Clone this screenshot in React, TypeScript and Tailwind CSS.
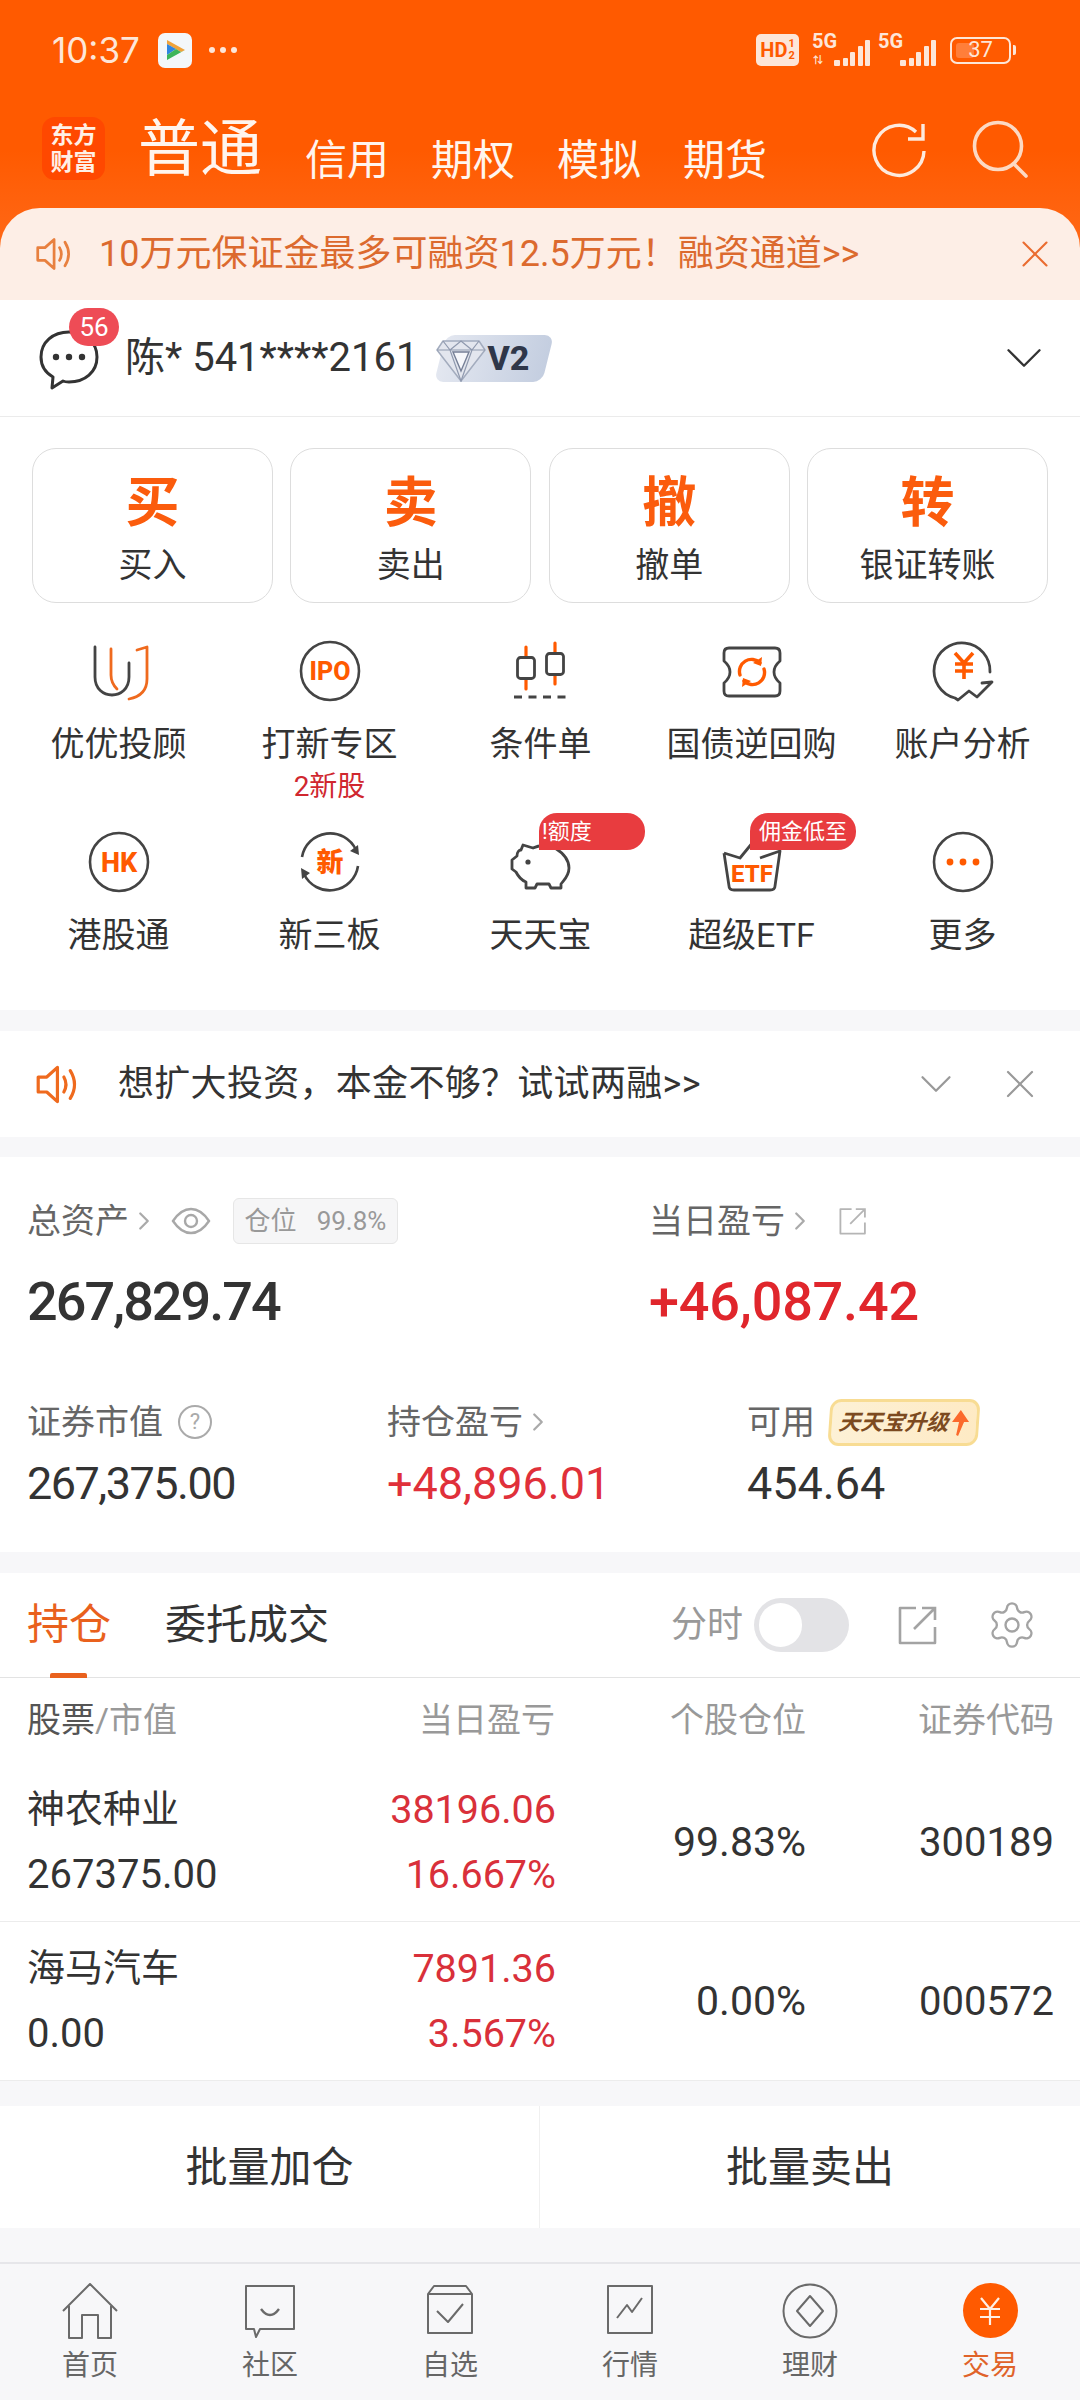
import { ChevronDown, X, ChevronRight, Settings } from "lucide-react";
import type { ReactNode } from "react";

const DARK = "#444444";
const ORANGE = "#ff5a00";

function Svg({ size = 64, children, className = "" }: { size?: number; children: ReactNode; className?: string }) {
  return (
    <svg width={size} height={size} viewBox="0 0 64 64" fill="none" className={className}>
      {children}
    </svg>
  );
}

function Ring() {
  return <circle cx="32" cy="32" r="29" stroke={DARK} strokeWidth="2.6" />;
}

function BadgeText({ children, size = 20 }: { children: string; size?: number }) {
  return (
    <text x="32" y="32" dy="0.36em" textAnchor="middle" fontSize={size} fontWeight="800" fill={ORANGE} fontFamily="Roboto, 'Noto Sans CJK SC', sans-serif">
      {children}
    </text>
  );
}

const UyouIcon = () => (
  <Svg>
    <path d="M8 8V38C8 62 42 62 42 38V24" stroke={DARK} strokeWidth="2.8" strokeLinecap="round" />
    <path d="M24 10V36Q24 44 30 50" stroke="#ef6a1e" strokeWidth="2.8" strokeLinecap="round" />
    <path d="M50 11L60 8V40C60 52 52 58 42 60" stroke="#ef6a1e" strokeWidth="2.8" strokeLinecap="round" strokeLinejoin="round" />
  </Svg>
);

const IpoIcon = () => (
  <Svg>
    <Ring />
    <BadgeText size={25}>IPO</BadgeText>
  </Svg>
);

const CandleIcon = () => (
  <Svg>
    <path d="M17 8V50M46 4V45" stroke={ORANGE} strokeWidth="3.2" strokeLinecap="round" />
    <rect x="8.5" y="18.5" width="17" height="21" rx="3" fill="#fff" stroke={DARK} strokeWidth="2.8" />
    <rect x="37.5" y="14.5" width="17" height="21" rx="3" fill="#fff" stroke={DARK} strokeWidth="2.8" />
    <path d="M5 58H59" stroke={DARK} strokeWidth="2.8" strokeDasharray="8 6.5" />
  </Svg>
);

const RepoIcon = () => (
  <Svg>
    <path d="M9 9H55Q60 9 60 14V22Q54 27 54 33T60 44V52Q60 57 55 57H9Q4 57 4 52V44Q10 39 10 33T4 22V14Q4 9 9 9Z" stroke={DARK} strokeWidth="2.8" strokeLinejoin="round" />
    <path d="M20 36A12 12 0 0 1 40 24M44 30A12 12 0 0 1 24 42" stroke={ORANGE} strokeWidth="3.4" strokeLinecap="round" />
    <path d="M42 18L41 27L33 24ZM22 48L23 39L31 42Z" fill={ORANGE} />
  </Svg>
);

const AnalysisIcon = () => (
  <Svg>
    <path d="M59 33A28 28 0 1 0 24 59L27 61L38 52L46 58L61 43L51 44" stroke={DARK} strokeWidth="2.8" strokeLinejoin="round" strokeLinecap="round" />
    <path d="M24 14L33 24L42 14M33 24V40M24 25H42M24 32H42" stroke={ORANGE} strokeWidth="3.6" />
  </Svg>
);

const HkIcon = () => (
  <Svg>
    <Ring />
    <BadgeText size={27}>HK</BadgeText>
  </Svg>
);

const NewIcon = () => (
  <Svg>
    <path d="M4 27A28.5 28.5 0 0 1 58 20M60 36A28.5 28.5 0 0 1 6 44" stroke={DARK} strokeWidth="2.6" />
    <path d="M61 25L52 21L60 15ZM3 38L12 43L4 49Z" fill={DARK} />
    <BadgeText size={27}>新</BadgeText>
  </Svg>
);

const PigIcon = () => (
  <Svg>
    <path
      d="M14 15L24 18C30 15 40 15 46 18C54 23 60 30 60 38C60 46 55 50 52 54V58H42L40 54H28L26 58H17V52C12 50 9 46 7 42L3 39V30L8 26C8 22 10 20 12 20Z"
      stroke={DARK}
      strokeWidth="2.8"
      strokeLinejoin="round"
    />
    <circle cx="19" cy="32" r="2.6" fill={DARK} />
  </Svg>
);

const EtfIcon = () => (
  <Svg>
    <path d="M4 23L20 28L38 6M40 28L60 21L55 56Q55 60 50 60H14Q9 60 9 56L4 23" stroke={DARK} strokeWidth="2.8" strokeLinejoin="round" />
    <text x="32" y="52" textAnchor="middle" fontSize="24" fontWeight="800" fill={ORANGE} fontFamily="Roboto, sans-serif">
      ETF
    </text>
  </Svg>
);

const MoreIcon = () => (
  <Svg>
    <Ring />
    <circle cx="19" cy="32" r="3.4" fill={ORANGE} />
    <circle cx="32" cy="32" r="3.4" fill={ORANGE} />
    <circle cx="45" cy="32" r="3.4" fill={ORANGE} />
  </Svg>
);

function Speaker({ color, className }: { color: string; className: string }) {
  return (
    <svg viewBox="0 0 44 40" fill="none" className={className}>
      <path d="M3 13H11L21 4V36L11 27H3Z" stroke={color} strokeWidth="3" strokeLinejoin="round" />
      <path d="M27 13Q31 20 27 27M33 7Q41 20 33 33" stroke={color} strokeWidth="3" strokeLinecap="round" />
    </svg>
  );
}

function Bars({ color = "#fde6d8" }: { color?: string }) {
  const heights = [8, 14, 20, 26];
  return (
    <div className="flex items-end gap-[2.5px] h-[28px]">
      <div className="w-[6px] h-[6px] rounded-[1px]" style={{ background: color }} />
      {heights.map((h) => (
        <div key={h} className="w-[5px] rounded-[1px]" style={{ height: h, background: color }} />
      ))}
    </div>
  );
}

function StatusBar() {
  return (
    <div className="h-[100px] flex justify-between items-center pl-[52px] pr-[64px] text-[#fde6d8]">
      <div className="flex items-center">
        <span className="text-[35px] font-['Inter','Roboto',sans-serif] leading-none">10:37</span>
        <div className="ml-[18px] w-[34px] h-[35px] rounded-[7px] bg-[#f3f7fa] flex items-center justify-center">
          <svg width="24" height="24" viewBox="0 0 24 24">
            <path d="M4 2L22 12L18 14L4 6Z" fill="#f1a33b" />
            <path d="M4 6L13 11L4 17Z" fill="#2f86e0" />
            <path d="M22 12L4 22V17L13 11L18 14Z" fill="#3cb55a" />
          </svg>
        </div>
        <div className="ml-[17px] flex gap-[5px]">
          <span className="w-[6px] h-[6px] rounded-full bg-[#fde6d8]" />
          <span className="w-[6px] h-[6px] rounded-full bg-[#fde6d8]" />
          <span className="w-[6px] h-[6px] rounded-full bg-[#fde6d8]" />
        </div>
      </div>
      <div className="flex items-center">
        <div className="w-[43px] h-[32px] rounded-[5px] bg-[#fde6d8] flex items-center justify-center text-[#ff5a00] font-bold text-[20px] leading-none font-['Roboto',sans-serif]">
          HD<span className="flex flex-col text-[11px] leading-[12px] ml-[1px]"><span>1</span><span>2</span></span>
        </div>
        <div className="relative ml-[13px] w-[58px] h-[32px]">
          <span className="absolute left-0 top-[-3px] text-[20px] font-bold leading-[20px] font-['Roboto',sans-serif]">5G</span>
          <span className="absolute left-[1px] bottom-[0px] text-[10px] leading-[10px] font-bold">⇅</span>
          <div className="absolute right-0 bottom-0"><Bars /></div>
        </div>
        <div className="relative ml-[8px] w-[58px] h-[32px]">
          <span className="absolute left-0 top-[-3px] text-[20px] font-bold leading-[20px] font-['Roboto',sans-serif]">5G</span>
          <div className="absolute right-0 bottom-0"><Bars /></div>
        </div>
        <div className="ml-[14px] w-[61px] h-[27px] rounded-[7px] border-2 border-[#fde6d8] relative flex items-center justify-center">
          <div className="absolute left-[4px] top-[4px] bottom-[4px] w-[18px] rounded-[3px] bg-[#ff7e3a]" />
          <span className="relative text-[22px] leading-none font-['Roboto',sans-serif]">37</span>
        </div>
        <div className="ml-[2px] w-[3px] h-[10px] rounded-r-[2px] bg-[#fde6d8]" />
      </div>
    </div>
  );
}

function TopNav() {
  const tabs = ["信用", "期权", "模拟", "期货"];
  return (
    <div className="h-[108px] flex items-start pl-[42px] text-[#fff5ee]">
      <div className="mt-[17px] w-[63px] h-[63px] rounded-[13px] bg-[#ff4800] flex flex-col items-center justify-center text-[23px] leading-[27px] font-bold text-[#fff0e6]">
        <span>东方</span>
        <span>财富</span>
      </div>
      <span className="ml-[33px] mt-[12px] text-[62px] leading-[76px]">普通</span>
      <div className="ml-[43px] mt-[31px] flex gap-[42px] text-[42px] leading-[60px]">
        {tabs.map((t) => (
          <span key={t}>{t}</span>
        ))}
      </div>
      <div className="ml-auto mr-[50px] mt-[20px] flex gap-[44px] items-center">
        <svg width="58" height="58" viewBox="0 0 58 58" fill="none" stroke="#fdeadd" strokeWidth="3.4">
          <path d="M54 31A25 25 0 1 1 46 12" />
          <path d="M53 4V19H38" />
        </svg>
        <svg width="58" height="58" viewBox="0 0 58 58" fill="none" stroke="#fcd9c3" strokeWidth="3.6">
          <circle cx="26" cy="26" r="23.5" />
          <path d="M42 44L54 56" strokeLinecap="round" />
        </svg>
      </div>
    </div>
  );
}

function PromoBanner() {
  return (
    <div className="h-[92px] rounded-t-[40px] bg-[#fdeee6] flex items-center pl-[35px] pr-[22px] text-[#dc6a2e]">
      <Speaker color="#e8803f" className="w-[40px] h-[38px]" />
      <span className="ml-[24px] text-[36px] leading-[50px]">10万元保证金最多可融资12.5万元！融资通道&gt;&gt;</span>
      <X className="ml-auto text-[#ea6c30]" size={46} strokeWidth={1.1} />
    </div>
  );
}

function AccountRow() {
  return (
    <div className="h-[117px] bg-white border-b border-[#ebebeb] flex items-center pl-[39px] pr-[25px]">
      <div className="relative w-[60px] h-[60px] mt-[3px]">
        <svg width="60" height="60" viewBox="0 0 60 60" fill="none">
          <path d="M30 2C14 2 2 12 2 27C2 36 7 43 14 47L13 58L24 51C26 52 28 52 30 52C46 52 58 42 58 27C58 12 46 2 30 2Z" stroke="#333" strokeWidth="3" strokeLinejoin="round" />
          <circle cx="17" cy="27" r="3.2" fill="#333" />
          <circle cx="30" cy="27" r="3.2" fill="#333" />
          <circle cx="43" cy="27" r="3.2" fill="#333" />
        </svg>
        <span className="absolute left-[30px] top-[-22px] w-[50px] h-[38px] rounded-full bg-[#ee4c56] text-white text-[26px] leading-[38px] text-center">56</span>
      </div>
      <span className="ml-[26px] text-[40px] leading-[50px] text-[#333]">陈* 541****2161</span>
      <div className="relative ml-[18px] w-[112px] h-[47px] flex items-center">
        <div className="absolute inset-y-0 left-[4px] right-0 -skew-x-[14deg] rounded-[9px] bg-gradient-to-r from-[#e3e7f0] to-[#c4cee0]" />
        <svg width="50" height="48" viewBox="0 0 50 48" className="relative">
          <path d="M7 7H43L49 16L25 47L1 16Z" fill="#e3e6ee" stroke="#a3acbe" strokeWidth="1.5" strokeLinejoin="round" />
          <path d="M7 7L14 16L25 47L36 16L43 7M1 16H49M14 16L25 7L36 16" fill="none" stroke="#8f99ae" strokeWidth="1.2" />
          <path d="M17 18H33L25 37Z" fill="#f6f7fb" stroke="#757f96" strokeWidth="1.4" />
        </svg>
        <span className="relative text-[34px] font-extrabold text-[#2f3749] leading-none ml-[1px] font-['Roboto',sans-serif]">V2</span>
      </div>
      <ChevronDown className="ml-auto text-[#333]" size={62} strokeWidth={0.9} />
    </div>
  );
}

function ActionCard({ big, label }: { big: string; label: string }) {
  return (
    <div className="w-[241px] h-[155px] rounded-[24px] border border-[#dddddd] flex flex-col items-center">
      <span className="mt-[25px] text-[54px] leading-[60px] font-bold text-[#fb5c0d]">{big}</span>
      <span className="mt-[8px] text-[34px] leading-[46px] text-[#333]">{label}</span>
    </div>
  );
}

function Entry({ icon, label, sub, pill, pillClass }: { icon: ReactNode; label: string; sub?: string; pill?: string; pillClass?: string }) {
  return (
    <div className="relative flex flex-col items-center">
      <div className="w-[64px] h-[64px]">{icon}</div>
      <span className="mt-[19px] text-[34px] leading-[44px] text-[#333] whitespace-nowrap">{label}</span>
      {sub && <span className="mt-[4px] text-[28px] leading-[34px] text-[#d0272f]">{sub}</span>}
      {pill && (
        <span className={`absolute top-[-17px] h-[37px] rounded-t-[18px] rounded-br-[18px] bg-[#e83c3f] text-white text-[22px] leading-[37px] whitespace-nowrap overflow-hidden ${pillClass}`}>
          {pill}
        </span>
      )}
    </div>
  );
}

function Actions() {
  return (
    <div className="h-[593px] bg-white pt-[31px]">
      <div className="flex justify-between pl-[32px] pr-[32px]">
        <ActionCard big="买" label="买入" />
        <ActionCard big="卖" label="卖出" />
        <ActionCard big="撤" label="撤单" />
        <ActionCard big="转" label="银证转账" />
      </div>
      <div className="mt-[36px] ml-[13px] grid grid-cols-[211px_211px_211px_211px_211px] grid-rows-[191px_auto]">
        <Entry icon={<UyouIcon />} label="优优投顾" />
        <Entry icon={<IpoIcon />} label="打新专区" sub="2新股" />
        <Entry icon={<CandleIcon />} label="条件单" />
        <Entry icon={<RepoIcon />} label="国债逆回购" />
        <Entry icon={<AnalysisIcon />} label="账户分析" />
        <Entry icon={<HkIcon />} label="港股通" />
        <Entry icon={<NewIcon />} label="新三板" />
        <Entry icon={<PigIcon />} label="天天宝" pill="!额度" pillClass="left-[104px] w-[106px] pl-[3px]" />
        <Entry icon={<EtfIcon />} label="超级ETF" pill="佣金低至" pillClass="left-[104px] w-[106px] text-center" />
        <Entry icon={<MoreIcon />} label="更多" />
      </div>
    </div>
  );
}

function InvestNotice() {
  return (
    <div className="h-[106px] bg-white flex items-center pl-[35px] pr-[36px]">
      <Speaker color="#ef6a1e" className="w-[47px] h-[43px]" />
      <span className="ml-[36px] text-[36px] leading-[46px] text-[#333] tracking-[0.3px]">想扩大投资，本金不够？试试两融&gt;&gt;</span>
      <ChevronDown className="ml-auto text-[#999]" size={54} strokeWidth={1} />
      <X className="ml-[33px] text-[#999]" size={48} strokeWidth={1.1} />
    </div>
  );
}

function Arrow() {
  return <ChevronRight className="text-[#aaa]" size={30} strokeWidth={1.8} />;
}

function ShareGlyph({ size, color, strokeWidth }: { size: number; color: string; strokeWidth: number }) {
  return (
    <svg width={size} height={size} viewBox="0 0 40 40" fill="none" stroke={color} strokeWidth={strokeWidth}>
      <path d="M18 3H2V38H37V22" strokeLinejoin="round" />
      <path d="M16 24L37 3M24 3H37V15" />
    </svg>
  );
}

function Assets() {
  return (
    <div className="h-[395px] bg-white pt-[42px] pl-[27px]">
      <div className="grid grid-cols-[622px_auto]">
        <div>
          <div className="h-[44px] flex items-center text-[34px] text-[#666]">
            <span>总资产</span>
            <Arrow />
            <svg width="40" height="28" viewBox="0 0 40 28" fill="none" stroke="#a8a8a8" strokeWidth="2.4" className="ml-[12px]">
              <path d="M2 14C8 5 14 2 20 2S32 5 38 14C32 23 26 26 20 26S8 23 2 14Z" />
              <circle cx="20" cy="14" r="6" />
            </svg>
            <div className="ml-[22px] w-[165px] h-[46px] rounded-[6px] bg-[#f6f6f7] border border-[#e6e6e6] flex items-center justify-center gap-[20px] text-[26px] text-[#999]">
              <span>仓位</span>
              <span>99.8%</span>
            </div>
          </div>
          <div className="mt-[23px] h-[72px] text-[54px] leading-[72px] font-medium text-[#333] tracking-[-2px]">267,829.74</div>
        </div>
        <div>
          <div className="h-[44px] flex items-center text-[34px] text-[#666]">
            <span>当日盈亏</span>
            <Arrow />
            <div className="ml-[24px]"><ShareGlyph size={28} color="#b5b5b5" strokeWidth={2.6} /></div>
          </div>
          <div className="mt-[23px] h-[72px] text-[54px] leading-[72px] font-medium text-[#e0262c] tracking-[-0.2px]">+46,087.42</div>
        </div>
      </div>
      <div className="mt-[60px] grid grid-cols-[360px_360px_auto]">
        <div>
          <div className="h-[48px] flex items-center text-[34px] text-[#666]">
            <span>证券市值</span>
            <span className="ml-[15px] w-[34px] h-[34px] rounded-full border-2 border-[#aaa] text-[#aaa] text-[22px] leading-[30px] text-center">?</span>
          </div>
          <div className="mt-[12px] h-[52px] text-[45px] leading-[52px] text-[#333] tracking-[-1.5px]">267,375.00</div>
        </div>
        <div>
          <div className="h-[48px] flex items-center text-[34px] text-[#666]">
            <span>持仓盈亏</span>
            <Arrow />
          </div>
          <div className="mt-[12px] h-[52px] text-[45px] leading-[52px] text-[#e0303a]">+48,896.01</div>
        </div>
        <div>
          <div className="h-[48px] flex items-center text-[34px] text-[#666]">
            <span>可用</span>
            <div className="ml-[14px] w-[150px] h-[47px] -skew-x-[4deg] rounded-[11px] border-[3px] border-[#f8dc93] bg-gradient-to-r from-[#fdf1d6] to-[#feeac4] flex items-center justify-center gap-[1px]">
              <span className="text-[22px] font-bold italic text-[#7c4a20] leading-none whitespace-nowrap">天天宝升级</span>
              <svg width="20" height="28" viewBox="0 0 20 28" className="shrink-0">
                <path d="M10 1L19 13H14L9 27L7 26L9 13H2Z" fill="#fb6a2c" />
              </svg>
            </div>
          </div>
          <div className="mt-[12px] h-[52px] text-[45px] leading-[52px] text-[#333]">454.64</div>
        </div>
      </div>
    </div>
  );
}

function HoldingsTabs() {
  return (
    <div className="h-[105px] bg-white border-b border-[#e3e3e3] flex items-center pl-[27px] pr-[42px]">
      <div className="relative h-full flex items-center">
        <span className="text-[42px] leading-[60px] text-[#e9611d]">持仓</span>
        <span className="absolute left-[23px] bottom-[-1px] w-[37px] h-[5px] rounded-t-[2px] bg-[#e9611d]" />
      </div>
      <span className="ml-[54px] text-[41px] leading-[60px] text-[#333]">委托成交</span>
      <span className="ml-auto text-[36px] text-[#999]">分时</span>
      <div className="ml-[11px] w-[95px] h-[54px] rounded-full bg-[#e3e3e6] relative">
        <span className="absolute left-[5px] top-[5px] w-[43px] h-[44px] rounded-full bg-white" />
      </div>
      <div className="ml-[49px]"><ShareGlyph size={40} color="#a3a3a3" strokeWidth={2.6} /></div>
      <Settings className="ml-[48px] text-[#a3a3a3]" size={52} strokeWidth={1.1} />
    </div>
  );
}

type Holding = { name: string; value: string; profit: string; rate: string; weight: string; code: string };

const holdings: Holding[] = [
  { name: "神农种业", value: "267375.00", profit: "38196.06", rate: "16.667%", weight: "99.83%", code: "300189" },
  { name: "海马汽车", value: "0.00", profit: "7891.36", rate: "3.567%", weight: "0.00%", code: "000572" },
];

function HoldingsTable() {
  return (
    <div className="bg-white">
      <div className="h-[85px] flex items-center pl-[27px] text-[34px] text-[#999]">
        <div className="w-[300px]"><span className="text-[#555]">股票</span>/市值</div>
        <div className="w-[228px] text-right">当日盈亏</div>
        <div className="w-[251px] text-right">个股仓位</div>
        <div className="w-[248px] text-right">证券代码</div>
      </div>
      {holdings.map((h) => (
        <div key={h.code} className="h-[159px] flex items-center pl-[27px] border-b border-[#ececec] text-[40px] leading-[65px] text-[#333]">
          <div className="w-[300px]">
            <div className="text-[38px]">{h.name}</div>
            <div>{h.value}</div>
          </div>
          <div className="w-[229px] text-right text-[#d9303a] text-[39.5px]">
            <div>{h.profit}</div>
            <div>{h.rate}</div>
          </div>
          <div className="w-[250px] text-right text-[41px]">{h.weight}</div>
          <div className="w-[248px] text-right text-[40px]">{h.code}</div>
        </div>
      ))}
    </div>
  );
}

function BatchButtons() {
  return (
    <div className="h-[122px] bg-white flex items-center text-[42px] text-[#333]">
      <div className="w-[539px] text-center">批量加仓</div>
      <div className="h-full border-l border-[#f0f0f0] flex-1 flex items-center justify-center">批量卖出</div>
    </div>
  );
}

const tabStroke = { stroke: "#6a6a6a", strokeWidth: 2, fill: "none", strokeLinejoin: "round" as const };

const navItems: { label: string; icon: ReactNode }[] = [
  {
    label: "首页",
    icon: (
      <svg width="56" height="56" viewBox="0 0 56 56" {...tabStroke}>
        <path d="M1 28L28 1L55 28M7 23V55H20V32H36V55H49V23" />
      </svg>
    ),
  },
  {
    label: "社区",
    icon: (
      <svg width="56" height="56" viewBox="0 0 56 56" {...tabStroke}>
        <path d="M4 3H52V46H18L14 54L12 46H4Z" />
        <path d="M19 26Q28 38 37 26" strokeWidth="2.4" />
      </svg>
    ),
  },
  {
    label: "自选",
    icon: (
      <svg width="56" height="56" viewBox="0 0 56 56" {...tabStroke}>
        <path d="M12 3H44L50 11V50H6V11Z" />
        <path d="M6 11H50" />
        <path d="M15 28L26 39L41 21" />
      </svg>
    ),
  },
  {
    label: "行情",
    icon: (
      <svg width="56" height="56" viewBox="0 0 56 56" {...tabStroke}>
        <path d="M6 3H50V50H6Z" />
        <path d="M15 35L25 22L30 29L40 15" />
      </svg>
    ),
  },
  {
    label: "理财",
    icon: (
      <svg width="56" height="56" viewBox="0 0 56 56" {...tabStroke}>
        <circle cx="28" cy="28" r="26.5" />
        <path d="M28 13L41 28L28 43L15 28Z" />
      </svg>
    ),
  },
];

function BottomNav() {
  return (
    <div className="mt-auto h-[138px] border-t-2 border-[#e6e6ea] bg-[#f7f7f9] grid grid-cols-6 pt-[19px]">
      {navItems.map((item) => (
        <div key={item.label} className="flex flex-col items-center">
          <div className="h-[56px]">{item.icon}</div>
          <span className="mt-[7px] text-[28px] leading-[40px] text-[#666]">{item.label}</span>
        </div>
      ))}
      <div className="flex flex-col items-center">
        <div className="w-[55px] h-[55px] rounded-full bg-[#ff5a00] flex items-center justify-center">
          <svg width="24" height="30" viewBox="0 0 24 30" fill="none" stroke="#fff0e6" strokeWidth="2.2">
            <path d="M3 2L12 13L21 2M12 13V29M2 13H22M2 21H22" />
          </svg>
        </div>
        <span className="mt-[8px] text-[28px] leading-[40px] text-[#e0632a]">交易</span>
      </div>
    </div>
  );
}

export default function App() {
  return (
    <div className="w-[1080px] h-[2400px] overflow-hidden flex flex-col bg-[#f7f7f9] font-['Roboto','Noto_Sans_CJK_SC',sans-serif]">
      <div className="h-[300px] shrink-0 bg-gradient-to-b from-[#ff5a00] from-50% to-[#ff6f1d]">
        <StatusBar />
        <TopNav />
        <PromoBanner />
      </div>
      <AccountRow />
      <Actions />
      <div className="h-[21px] shrink-0" />
      <InvestNotice />
      <div className="h-[20px] shrink-0" />
      <Assets />
      <div className="h-[21px] shrink-0" />
      <HoldingsTabs />
      <HoldingsTable />
      <div className="h-[25px] shrink-0" />
      <BatchButtons />
      <BottomNav />
    </div>
  );
}
